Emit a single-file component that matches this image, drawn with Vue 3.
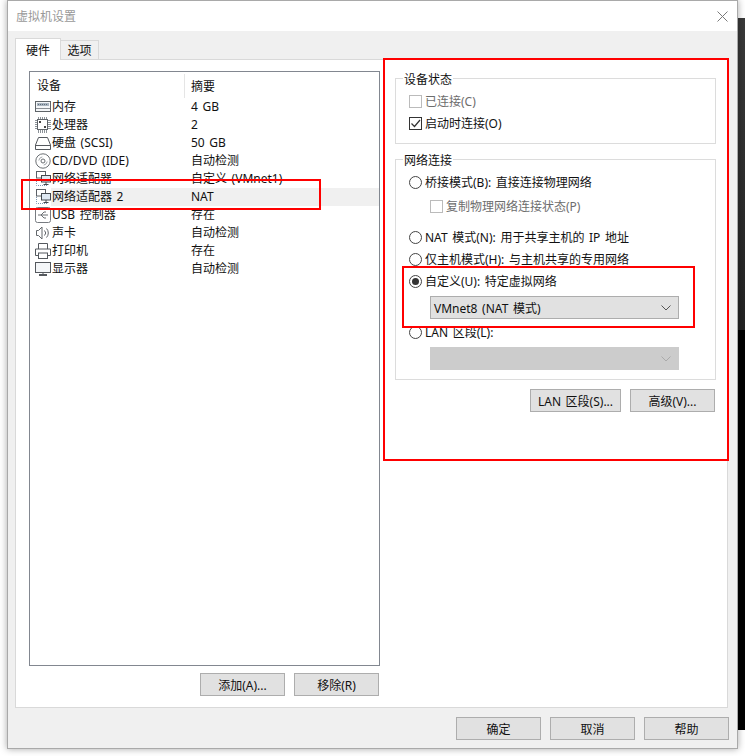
<script setup>
const devices = [
  { icon: 'mem', name: '内存', sum: '4 GB' },
  { icon: 'cpu', name: '处理器', sum: '2' },
  { icon: 'hdd', name: '硬盘 (SCSI)', sum: '50 GB' },
  { icon: 'cd', name: 'CD/DVD (IDE)', sum: '自动检测' },
  { icon: 'net', name: '网络适配器', sum: '自定义 (VMnet1)' },
  { icon: 'net', name: '网络适配器 2', sum: 'NAT', selected: true },
  { icon: 'usb', name: 'USB 控制器', sum: '存在' },
  { icon: 'snd', name: '声卡', sum: '自动检测' },
  { icon: 'prn', name: '打印机', sum: '存在' },
  { icon: 'mon', name: '显示器', sum: '自动检测' },
]
</script>

<template>
  <div class="page">
    <div class="backdrop"></div>
    <div class="dialog">
      <div class="titlebar">
        <span class="title">虚拟机设置</span>
        <svg class="close" width="11" height="11" viewBox="0 0 11 11"><path d="M.5.5l10 10M10.500.5l-10 10" stroke="#7a7a7a" fill="none"/></svg>
      </div>
      <div class="body">
        <div class="tabs">
          <div class="tab active">硬件</div>
          <div class="tab">选项</div>
        </div>
        <div class="panel">
          <div class="left">
            <div class="list">
              <div class="list-head">
                <span class="col-a">设备</span>
                <span class="col-b">摘要</span>
              </div>
              <div v-for="d in devices" :key="d.name" class="row">
                <span class="ico">
                  <svg width="16" height="16" viewBox="0 0 16 16" fill="none">
                    <g v-if="d.icon === 'mem'">
                      <rect x=".5" y="2.500" width="15" height="10" stroke="#5f6468" fill="#f4f6f8"/>
                      <rect x="2" y="4" width="12" height="3" fill="#a9b4bf"/>
                      <path d="M3 5.500h10" stroke="#5f6d7a" stroke-dasharray="1 1"/>
                      <path d="M1 9.500h14" stroke="#8a8f94"/>
                    </g>
                    <g v-else-if="d.icon === 'cpu'">
                      <path d="M3.500 0v16M5.500 0v16M7.500 0v16M9.500 0v16M11.500 0v16M0 3.500h16M0 5.500h16M0 7.500h16M0 9.500h16M0 11.500h16" stroke="#8c9298"/>
                      <rect x="2.500" y="2.500" width="10" height="10" fill="#fff" stroke="#60656a"/>
                      <path d="M4 4h2v2H4zM9 9h2v2H9z" fill="#444"/>
                    </g>
                    <g v-else-if="d.icon === 'hdd'" stroke="#55595e">
                      <path d="M3.500 2.500h9l3 7.500v4.500H.5V10zM.5 10.500h15"/>
                    </g>
                    <g v-else-if="d.icon === 'cd'">
                      <circle cx="8" cy="8" r="7.200" stroke="#6b6f73"/>
                      <circle cx="8" cy="8" r="2" stroke="#6b6f73"/>
                      <path d="M3.800 7.500a4.300 4.300 0 0 1 3.500-3.600M12.200 8.500a4.300 4.300 0 0 1-3.500 3.600" stroke="#a5a9ad"/>
                    </g>
                    <g v-else-if="d.icon === 'net'">
                      <path d="M1.500 8v6.500h11" stroke="#7a94b0" stroke-dasharray="1 1"/>
                      <rect x="1.500" y=".5" width="9" height="6.500" fill="#fff" stroke="#5b6066"/>
                      <rect x="6.500" y="4.500" width="9" height="6.500" fill="#dfe9f3" stroke="#44494e"/>
                      <path d="M11 11v2.500M8.500 13.500h5" stroke="#44494e"/>
                    </g>
                    <g v-else-if="d.icon === 'usb'">
                      <rect x=".5" y=".5" width="15" height="15" rx="2" stroke="#777b80"/>
                      <path d="M3 8h10M6 8l3-3h2M6 8l3 3h2" stroke="#6b6f73"/>
                    </g>
                    <g v-else-if="d.icon === 'snd'" stroke="#62666b">
                      <path d="M3.500 5.500h-2v5h2l3.500 3.500V2z"/>
                      <path d="M9.500 5.500a3.500 3.500 0 0 1 0 5M11.500 3.500a6.500 6.500 0 0 1 0 9"/>
                    </g>
                    <g v-else-if="d.icon === 'prn'" stroke="#55595e">
                      <path d="M3.500 6V.5h9V6M3.500 12.500h-3v-6.500h15v6.500h-3"/>
                      <rect x="3.500" y="10" width="9" height="5.500"/>
                    </g>
                    <g v-else>
                      <rect x=".5" y="1.500" width="15" height="10" fill="#f4f6f8" stroke="#55595e"/>
                      <path d="M4 14h8" stroke="#55595e" stroke-width="2"/>
                      <path d="M8 12v1" stroke="#55595e"/>
                    </g>
                  </svg>
                </span>
                <span class="name" :class="{ sel: d.selected }">{{ d.name }}</span>
                <span class="sum" :class="{ sel: d.selected }">{{ d.sum }}</span>
              </div>
            </div>
            <div class="left-btns">
              <button class="btn std">添加(A)...</button>
              <button class="btn std">移除(R)</button>
            </div>
          </div>
          <div class="right">
            <div class="group status">
              <div class="legend">设备状态</div>
              <label class="opt dis o-conn"><span class="check dis"></span>已连接(C)</label>
              <label class="opt o-boot"><span class="check">
                <svg width="13" height="13" viewBox="0 0 13 13"><path d="M2.500 6.500l3 3 5.500-6.500" stroke="#333" stroke-width="1.200" fill="none"/></svg>
              </span>启动时连接(O)</label>
            </div>
            <div class="group network">
              <div class="legend">网络连接</div>
              <label class="opt o-bridge"><span class="radio"></span>桥接模式(B): 直接连接物理网络</label>
              <label class="opt sub dis"><span class="check dis"></span>复制物理网络连接状态(P)</label>
              <label class="opt o-nat"><span class="radio"></span>NAT 模式(N): 用于共享主机的 IP 地址</label>
              <label class="opt o-tight"><span class="radio"></span>仅主机模式(H): 与主机共享的专用网络</label>
              <label class="opt o-tight"><span class="radio on"></span>自定义(U): 特定虚拟网络</label>
              <div class="select">
                <span>VMnet8 (NAT 模式)</span>
                <svg width="10" height="6" viewBox="0 0 10 6"><path d="M.5.500l4.500 4.500 4.500-4.500" stroke="#555" fill="none"/></svg>
              </div>
              <label class="opt o-tight"><span class="radio"></span>LAN 区段(L):</label>
              <div class="select disabled">
                <span></span>
                <svg width="10" height="6" viewBox="0 0 10 6"><path d="M.5.500l4.500 4.500 4.500-4.500" stroke="#aaa" fill="none"/></svg>
              </div>
            </div>
            <div class="right-btns">
              <button class="btn wide">LAN 区段(S)...</button>
              <button class="btn std">高级(V)...</button>
            </div>
          </div>
        </div>
        <div class="footer">
          <button class="btn std">确定</button>
          <button class="btn std">取消</button>
          <button class="btn std">帮助</button>
        </div>
      </div>
      <div class="mark mark-list"></div>
      <div class="mark mark-right"></div>
      <div class="mark mark-custom"></div>
    </div>
  </div>
</template>

<style>
html, body { margin: 0; background: #fff; }
</style>

<style scoped>
.page {
  position: relative;
  width: 745px;
  height: 756px;
  overflow: hidden;
  background: #fff;
  font-family: "Noto Sans", "Noto Sans CJK SC", sans-serif;
  font-size: 12px;
  word-spacing: 1.5px;
  color: #111;
}
.backdrop {
  position: absolute;
  left: 738px;
  top: 18px;
  width: 7px;
  height: 712px;
  background: linear-gradient(#3a3a3a, #222 312px, #000 312px);
}
.dialog {
  position: absolute;
  left: 7px;
  top: 0;
  width: 731px;
  height: 749px;
  box-sizing: border-box;
  border: 1px solid #a9a9a9;
  background: #f0f0f0;
  box-shadow: 0 0 7px rgba(0, 0, 0, .35);
  display: flex;
  flex-direction: column;
}
.titlebar {
  height: 30px;
  background: #fff;
  display: flex;
  align-items: center;
  justify-content: space-between;
  padding: 0 9px 0 8px;
  flex: none;
}
.title { color: #999; }
.body {
  flex: 1;
  display: flex;
  flex-direction: column;
  padding: 7px 7px 0;
  min-height: 0;
}
.tabs { display: flex; height: 21px; align-items: flex-end; position: relative; z-index: 1; flex: none; }
.tab {
  box-sizing: border-box;
  width: 39px;
  height: 19px;
  border: 1px solid #d9d9d9;
  border-bottom: 0;
  background: #f0f0f0;
  display: flex;
  align-items: center;
  justify-content: center;
  margin-left: -1px;
}
.tab.active {
  width: 46px;
  height: 22px;
  background: #fff;
  margin-left: 0;
  margin-bottom: -1px;
  position: relative;
  z-index: 1;
}
.panel {
  flex: 1;
  border: 1px solid #d9d9d9;
  background: #fff;
  display: flex;
  min-height: 0;
  box-sizing: border-box;
  margin-right: 2px;
}
.left { width: 366px; flex: none; padding: 11px 0 0 13px; box-sizing: border-box; }
.list {
  box-sizing: border-box;
  width: 351px;
  height: 595px;
  border: 1px solid #828790;
  padding-top: 2px;
}
.list-head { display: flex; height: 24px; align-items: center; }
.col-a { width: 155px; padding-left: 7px; box-sizing: border-box; height: 24px; line-height: 24px; border-right: 1px solid #e5e5e5; }
.col-b { padding-left: 6px; }
.row { display: flex; height: 18px; align-items: center; padding-left: 5px; }
.ico { width: 17px; height: 16px; flex: none; line-height: 0; }
.name { width: 139px; height: 18px; line-height: 18px; white-space: nowrap; flex: none; }
.sum { flex: 1; height: 18px; line-height: 18px; }
.name.sel { background: #f0f0f0; margin-left: -1px; padding-left: 1px; }
.sum.sel { background: #f0f0f0; }
.left-btns { display: flex; justify-content: flex-end; gap: 9px; margin-top: 7px; width: 350px; }
.btn {
  font: inherit;
  word-spacing: inherit;
  color: inherit;
  background: #e1e1e1;
  border: 1px solid #adadad;
  padding: 0;
  height: 23px;
  box-sizing: border-box;
  flex: none;
}
.btn.std { width: 85px; }
.btn.wide { width: 91px; }
.right { flex: 1; padding: 18px 11px 0 13px; box-sizing: border-box; min-width: 0; }
.group {
  box-sizing: border-box;
  border: 1px solid #dcdcdc;
  display: flex;
  flex-direction: column;
  align-items: flex-start;
}
.legend {
  margin: -6px 0 0 7px;
  padding: 0 1px;
  height: 14px;
  line-height: 14px;
  background: #fff;
  flex: none;
}
.status { height: 66px; }
.network { height: 221px; margin-top: 15px; }
.opt { display: flex; align-items: center; height: 18px; margin-left: 13px; gap: 3px; white-space: nowrap; flex: none; }
.o-conn { margin-top: 5px; }
.o-boot { margin-top: 4px; }
.o-bridge { margin-top: 5px; }
.o-nat { margin-top: 13px; }
.o-tight { margin-top: 4px; }
.opt.dis { color: #6d6d6d; }
.opt.sub { margin-left: 34px; margin-top: 6px; }
.check {
  box-sizing: border-box;
  width: 13px;
  height: 13px;
  border: 1px solid #333;
  background: #fff;
  display: inline-block;
  line-height: 0;
  flex: none;
}
.check svg { margin: -1px; }
.check.dis { border-color: #bbb; }
.radio {
  box-sizing: border-box;
  width: 13px;
  height: 13px;
  border: 1px solid #444;
  border-radius: 50%;
  background: #fff;
  flex: none;
  position: relative;
}
.radio.on::after {
  content: "";
  position: absolute;
  left: 2px;
  top: 2px;
  width: 7px;
  height: 7px;
  border-radius: 50%;
  background: #333;
}
.select {
  margin: 6px 0 0 34px;
  width: 249px;
  height: 23px;
  box-sizing: border-box;
  background: #e1e1e1;
  border: 1px solid #adadad;
  display: flex;
  align-items: center;
  justify-content: space-between;
  padding: 0 4px 0 3px;
  flex: none;
}
.select svg { margin-right: 3px; }
.select.disabled { background: #ccc; border-color: #ccc; }
.right-btns { display: flex; justify-content: flex-end; gap: 9px; margin: 9px 1px 0 0; }
.footer { height: 40px; display: flex; justify-content: flex-end; gap: 9px; padding: 9px 1px 0 0; box-sizing: border-box; flex: none; }
.mark { position: absolute; border: 2px solid #f00; box-sizing: border-box; pointer-events: none; z-index: 5; }
.mark-list { left: 13px; top: 178px; width: 300px; height: 31px; }
.mark-right { left: 375px; top: 57px; width: 346px; height: 403px; }
.mark-custom { left: 394px; top: 265px; width: 293px; height: 62px; }
</style>
